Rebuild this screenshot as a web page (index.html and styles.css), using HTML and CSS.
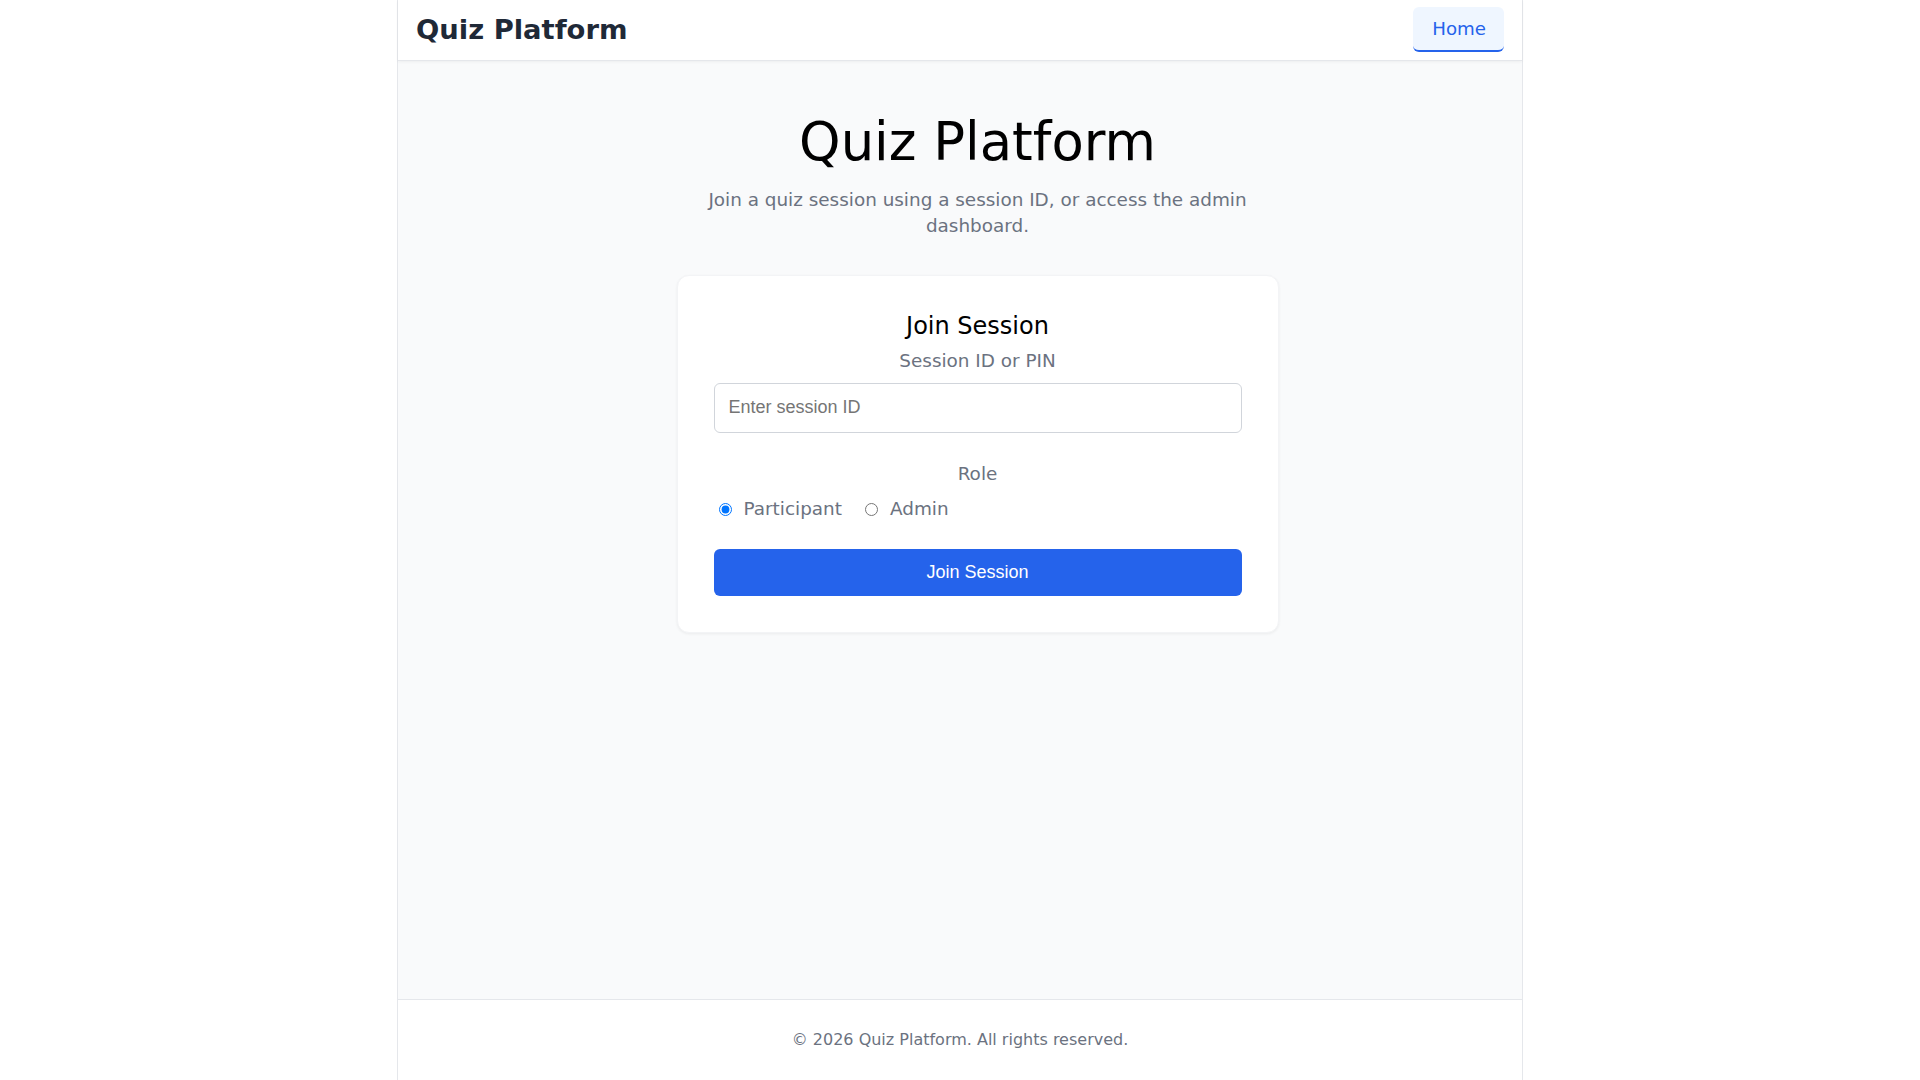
FILE: index.html
```html
<!DOCTYPE html>
<html lang="en">
<head>
<meta charset="utf-8">
<title>Quiz Platform</title>
<link rel="stylesheet" href="styles.css">
</head>
<body>
<div class="app">
  <header class="topbar">
    <div class="brand">Quiz Platform</div>
    <nav class="nav"><a class="nav-link active" href="#">Home</a></nav>
  </header>
  <main class="main">
    <div class="hero">
      <h1 class="hero-title">Quiz Platform</h1>
      <p class="hero-sub">Join a quiz session using a session ID, or access the admin dashboard.</p>
    </div>
    <section class="card">
      <h2 class="card-title">Join Session</h2>
      <label class="field-label" for="sid">Session ID or PIN</label>
      <input class="text-input" id="sid" type="text" placeholder="Enter session ID">
      <div class="role-group">
        <div class="field-label">Role</div>
        <div class="radio-row">
          <label class="radio-opt"><input type="radio" name="role" checked> Participant</label>
          <label class="radio-opt"><input type="radio" name="role"> Admin</label>
        </div>
      </div>
      <button class="btn-primary" type="button">Join Session</button>
    </section>
  </main>
  <footer class="footer">© 2026 Quiz Platform. All rights reserved.</footer>
</div>
</body>
</html>
```

FILE: styles.css
```css
* { box-sizing: border-box; }
html, body { margin: 0; padding: 0; }
body {
  background: #ffffff;
  font-family: "DejaVu Sans", sans-serif;
  color: #000;
}
.app {
  width: 1126px;
  margin: 0 auto;
  min-height: 100vh;
  display: flex;
  flex-direction: column;
  border-left: 1px solid #e5e7eb;
  border-right: 1px solid #e5e7eb;
  background: #f9fafb;
}
.topbar {
  height: 61px;
  display: flex;
  align-items: center;
  justify-content: space-between;
  padding: 0 18px 0 18px;
  background: #fff;
  border-bottom: 1px solid #e5e7eb;
  box-shadow: 0 1px 3px rgba(0,0,0,0.05);
  position: relative;
  z-index: 1;
}
.brand {
  font-weight: bold;
  font-size: 27.4px;
  color: #1f2937;
  margin-top: -2px;
}
.nav-link {
  display: block;
  font-size: 18.2px;
  line-height: 27px;
  color: #2563eb;
  text-decoration: none;
  background: #eff6ff;
  padding: 8px 18px 8px 19px;
  border-radius: 6px;
  border-bottom: 2px solid #2563eb;
  margin-top: -1px;
}
.main {
  flex: 1;
  padding: 50px 0 40px 35px;
  display: flex;
  flex-direction: column;
  align-items: center;
}
.hero { text-align: center; }
.hero-title {
  margin: 0 0 14px;
  font-size: 52.8px;
  font-weight: normal;
  line-height: 62px;
  color: #000;
}
.hero-sub {
  margin: 0 auto 36px;
  max-width: 600px;
  font-size: 18.4px;
  line-height: 26px;
  color: #6b7280;
}
.card {
  width: 602px;
  background: #fff;
  border: 1px solid #f3f4f6;
  border-radius: 12px;
  box-shadow: 0 1px 3px rgba(0,0,0,0.06);
  padding: 36px;
  display: flex;
  flex-direction: column;
}
.card-title {
  margin: 0 0 6px;
  font-size: 24px;
  font-weight: normal;
  line-height: 1.2;
  text-align: center;
  color: #000;
}
.field-label {
  display: block;
  text-align: center;
  font-size: 18.4px;
  line-height: 27px;
  color: #6b7280;
  margin-bottom: 9px;
}
.text-input {
  width: 100%;
  height: 50px;
  padding: 0 14px;
  font-family: "Liberation Sans", Arial, sans-serif;
  font-size: 18px;
  border: 1px solid #d1d5db;
  border-radius: 6px;
  background: #fff;
  color: #111;
}
.text-input::placeholder { color: #757575; }
.role-group { margin-top: 27px; }
.radio-row {
  display: flex;
  align-items: center;
  gap: 18px;
  height: 27px;
  margin-top: -1px;
}
.radio-opt {
  display: inline-flex;
  align-items: center;
  gap: 12px;
  font-size: 18.4px;
  line-height: 27px;
  color: #6b7280;
}
.radio-opt input {
  margin: 2px 0 0 5px;
  width: 13px;
  height: 13px;
}
.btn-primary {
  margin-top: 27px;
  height: 47px;
  width: 100%;
  border: none;
  border-radius: 6px;
  background: #2563eb;
  color: #fff;
  font-family: "Liberation Sans", Arial, sans-serif;
  font-size: 18px;
}
.footer {
  background: #fff;
  border-top: 1px solid #e5e7eb;
  text-align: center;
  font-size: 16px;
  line-height: 21px;
  color: #6b7280;
  padding: 29px 0 30px;
}
```
